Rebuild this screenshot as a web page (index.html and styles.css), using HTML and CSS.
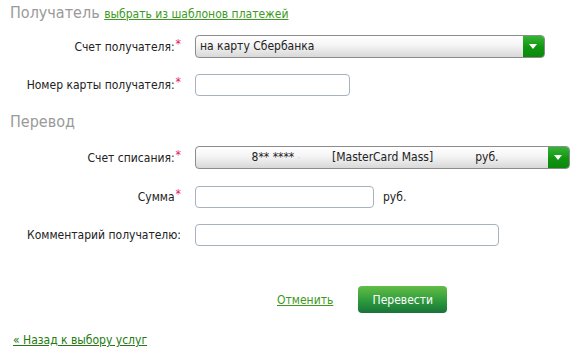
FILE: index.html
```html
<html>
<head>
   <link rel="stylesheet" href="styles.css">
</head>
<body>
<div class='payform'>
  <div class='section-title'>
    Получатель <a href='#' class='tpl-link'>выбрать из шаблонов платежей</a>
  </div>

  <div class='row row-select'>
    <label class='lbl'>Счет получателя:<span class='req'>*</span></label>
    <div class='select select-wide'>
      <span class='select-text'>на карту Сбербанка</span>
      <span class='select-arrow'></span>
    </div>
  </div>

  <div class='row'>
    <label class='lbl'>Номер карты получателя:<span class='req'>*</span></label>
    <input class='field field-card' type='text'>
  </div>

  <div class='section-title section-gap'>Перевод</div>

  <div class='row row-select'>
    <label class='lbl'>Счет списания:<span class='req'>*</span></label>
    <div class='select select-full'>
      <span class='select-text acc'>
        <span class='acc-num'>8** **** <i class='dot'>·</i></span>
        <span class='acc-name'>[MasterCard Mass]</span>
        <span class='acc-cur'>руб.</span>
      </span>
      <span class='select-arrow'></span>
    </div>
  </div>

  <div class='row'>
    <label class='lbl'>Сумма<span class='req'>*</span></label>
    <input class='field field-sum' type='text'>
    <span class='unit'>руб.</span>
  </div>

  <div class='row'>
    <label class='lbl'>Комментарий получателю:</label>
    <input class='field field-comment' type='text'>
  </div>

  <div class='actions'>
    <a href='#' class='cancel'>Отменить</a>
    <button class='btn-go'>Перевести</button>
  </div>

  <a href='#' class='back'>« Назад к выбору услуг</a>
</div>
</body>
</html>
```

FILE: styles.css
```css
  * {
     box-sizing: border-box;
  }
  body {
     margin: 0;
     background: #fff;
     font: 12px "DejaVu Sans Condensed", "DejaVu Sans", sans-serif;
     color: #222;
  }
  .payform {
     padding: 2px 0 0 10px;
  }

  .section-title {
     font-size: 16px;
     color: #9a9a9a;
     height: 22px;
     line-height: 22px;
  }
  .section-gap {
     margin-top: 15px;
  }
  .tpl-link {
     font-size: 12px;
     color: #3c9a1c;
  }

  .row {
     display: flex;
     align-items: center;
     margin-top: 16px;
     height: 22px;
  }
  .row-select {
     margin-top: 11px;
     height: 23px;
  }
  .section-gap + .row-select {
     margin-top: 13px;
  }
  .section-gap + .row-select + .row {
     margin-top: 17px;
  }

  .lbl {
     width: 171px;
     text-align: right;
     margin-right: 14px;
     white-space: nowrap;
  }
  .req {
     color: #e4145a;
     position: relative;
     top: -3px;
     margin-left: 1px;
  }

  .select {
     height: 23px;
     display: flex;
     border: 1px solid #8c8c8c;
     border-radius: 4px;
     overflow: hidden;
     background: linear-gradient(#ffffff, #f4f4f4 45%, #d8d8d8);
  }
  .select-wide {
     width: 350px;
  }
  .select-full {
     width: 375px;
  }
  .select-text {
     flex: 1;
     line-height: 21px;
     padding-left: 4px;
     white-space: nowrap;
  }
  .select-arrow {
     width: 21px;
     background: linear-gradient(#35b535, #119511 55%, #0b880b);
     position: relative;
  }
  .select-arrow:after {
     content: '';
     position: absolute;
     left: 6px;
     top: 8px;
     border-left: 4px solid transparent;
     border-right: 4px solid transparent;
     border-top: 5px solid #fff;
  }
  .acc {
     display: flex;
     padding-left: 0;
  }
  .acc-num {
     width: 104px;
     text-align: right;
  }
  .dot {
     font-style: normal;
     color: #bbb;
     font-size: 8px;
  }
  .acc-name {
     margin-left: 32px;
  }
  .acc-cur {
     margin-left: 42px;
  }

  .field {
     height: 22px;
     border: 1px solid #a6b2bf;
     border-radius: 4px;
     background: #fff;
     font: inherit;
     outline: none;
  }
  .field-card {
     width: 155px;
  }
  .field-sum {
     width: 179px;
  }
  .field-comment {
     width: 304px;
  }
  .unit {
     margin-left: 9px;
  }

  .actions {
     display: flex;
     align-items: center;
     margin: 40px 0 0 267px;
  }
  .cancel {
     color: #3c9a1c;
  }
  .btn-go {
     margin-left: 25px;
     height: 27px;
     width: 89px;
     border: none;
     border-radius: 4px;
     color: #fff;
     font: inherit;
     background: linear-gradient(#62be46, #2e9a3c 55%, #17733a);
  }

  .back {
     display: inline-block;
     margin: 20px 0 0 3px;
     color: #227a10;
  }
```
